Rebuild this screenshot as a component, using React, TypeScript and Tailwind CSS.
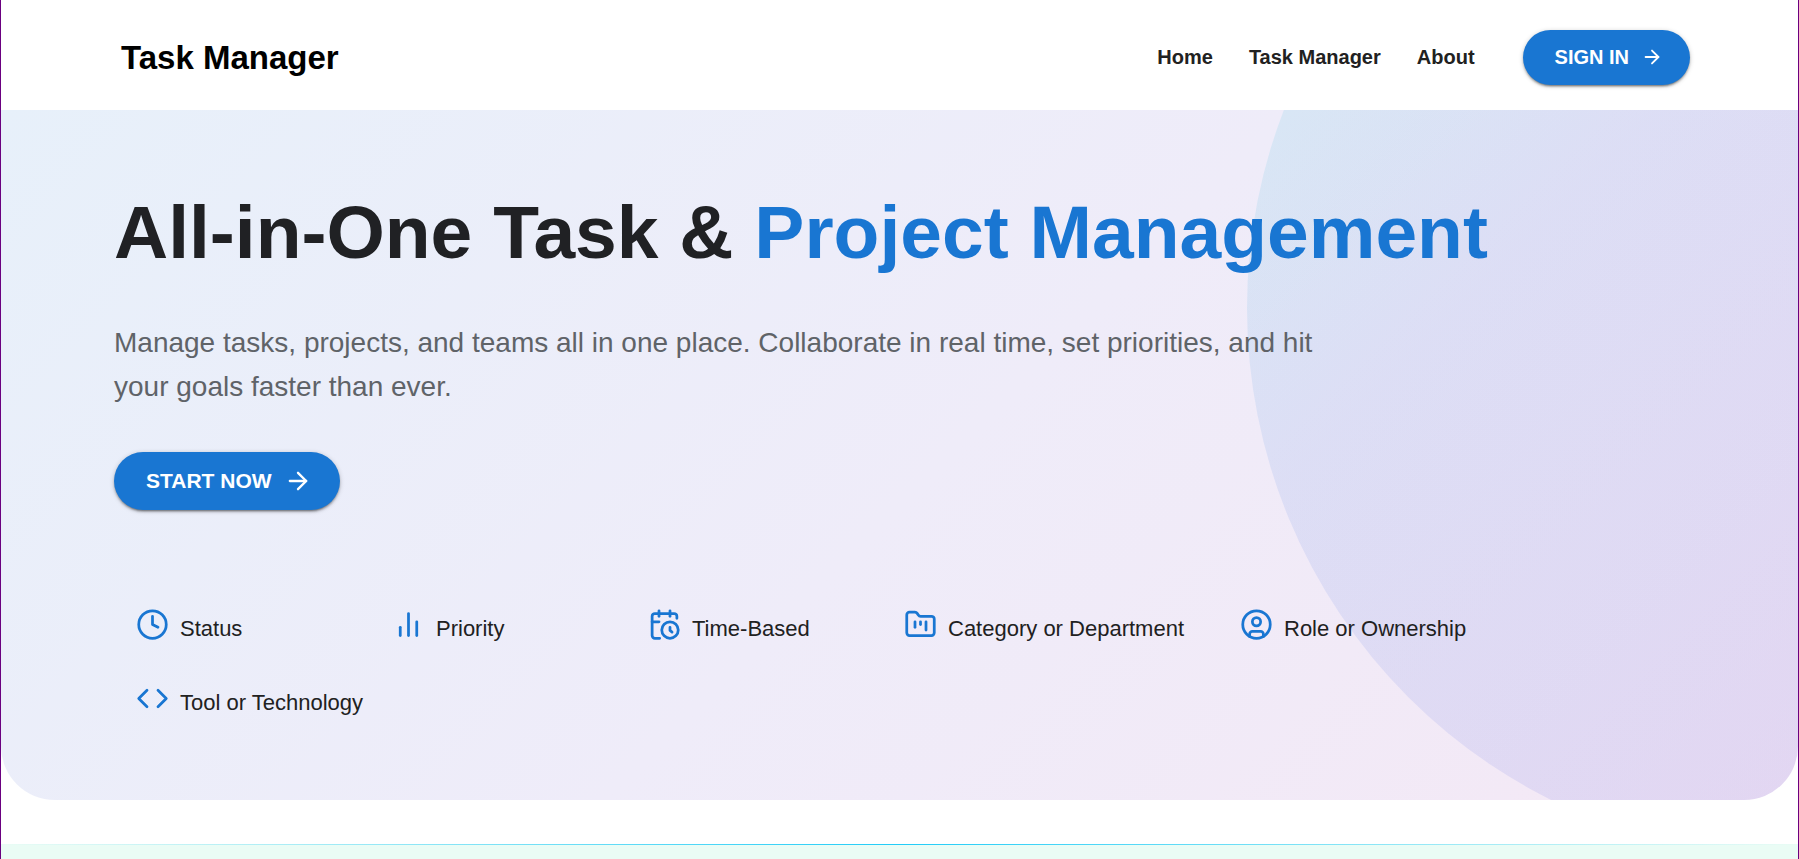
import type { ReactNode } from "react";
import { ArrowRight, Clock4, Code, FolderKanban } from "lucide-react";

const links = ["Home", "Task Manager", "About"];

function StrokeIcon({ children }: { children: ReactNode }) {
  return (
    <svg
      width="33"
      height="33"
      viewBox="0 0 24 24"
      fill="none"
      stroke="currentColor"
      strokeWidth="2"
      strokeLinecap="round"
      strokeLinejoin="round"
      aria-hidden="true"
    >
      {children}
    </svg>
  );
}

const features: { label: string; icon: ReactNode }[] = [
  { label: "Status", icon: <Clock4 size={33} aria-hidden="true" /> },
  {
    label: "Priority",
    icon: (
      <StrokeIcon>
        <path d="M18 20V10" />
        <path d="M12 20V4" />
        <path d="M6 20v-6" />
      </StrokeIcon>
    ),
  },
  {
    label: "Time-Based",
    icon: (
      <StrokeIcon>
        <path d="M21 7.5V6a2 2 0 0 0-2-2H5a2 2 0 0 0-2 2v14a2 2 0 0 0 2 2h3.5" />
        <path d="M16 2v4" />
        <path d="M8 2v4" />
        <path d="M3 10h5" />
        <path d="M17.5 17.5 16 16.3V14" />
        <circle cx="16" cy="16" r="6" />
      </StrokeIcon>
    ),
  },
  { label: "Category or Department", icon: <FolderKanban size={33} aria-hidden="true" /> },
  {
    label: "Role or Ownership",
    icon: (
      <StrokeIcon>
        <circle cx="12" cy="12" r="10" />
        <circle cx="12" cy="10" r="3" />
        <path d="M7 20.662V19a2 2 0 0 1 2-2h6a2 2 0 0 1 2 2v1.662" />
      </StrokeIcon>
    ),
  },
  { label: "Tool or Technology", icon: <Code size={33} aria-hidden="true" /> },
];

const raised =
  "shadow-[0_3px_1px_-2px_rgba(0,0,0,0.2),0_2px_2px_0_rgba(0,0,0,0.24),0_1px_5px_0_rgba(0,0,0,0.2)]";

function Header() {
  return (
    <header className="flex h-[110px] items-center justify-between bg-white pr-[108px] pl-[120px]">
      <a href="#home" className="pt-1.5 text-[33px] leading-10 font-bold text-black">
        Task Manager
      </a>
      <div className="flex items-center gap-12">
        <nav className="flex items-center gap-9 pt-1 text-[20px] leading-6 font-bold text-[#212121]">
          {links.map((link) => (
            <a key={link} href="#home">
              {link}
            </a>
          ))}
        </nav>
        <button
          type="button"
          className={`mt-1 flex h-[55px] items-center gap-3 rounded-full bg-[#1976d2] pr-[27px] pl-8 text-[20px] font-bold text-white ${raised}`}
        >
          SIGN IN
          <ArrowRight size={22} aria-hidden="true" />
        </button>
      </div>
    </header>
  );
}

function Hero() {
  return (
    <section className="relative overflow-hidden rounded-b-[54px] bg-[linear-gradient(135deg,#e7f0fa_0%,#efecf9_52%,#f4e8f5_100%)] pt-[76px] pb-[82px] pl-[113px]">
      <div
        aria-hidden="true"
        className="absolute -top-[352px] -right-[549px] size-[1100px] rounded-full bg-[linear-gradient(135deg,#32bad7_18%,#4b7ee1_35%,#5568e0_55%,#6450da_75%)] opacity-12"
      />
      <div className="relative">
        <h1 className="text-[75px] leading-[92px] font-bold text-[#202124]">
          All-in-One Task &amp; <span className="text-[#1976d2]">Project Management</span>
        </h1>
        <p className="mt-[43px] max-w-[1200px] text-[28px] leading-11 text-[#5f6368]">
          Manage tasks, projects, and teams all in one place. Collaborate in real time, set
          priorities, and hit your goals faster than ever.
        </p>
        <button
          type="button"
          className={`mt-[43px] flex h-[58px] items-center gap-3 rounded-full bg-[#1976d2] pr-7 pl-8 text-[21px] font-bold text-white ${raised}`}
        >
          START NOW
          <ArrowRight size={28} aria-hidden="true" />
        </button>
        <ul className="mt-[98px] flex max-w-[1430px] flex-wrap gap-x-14 gap-y-[38px] pl-[22px]">
          {features.map(({ label, icon }) => (
            <li key={label} className="flex min-w-50 items-start gap-[11px] text-[#1976d2]">
              {icon}
              <span className="pt-1.5 text-[22px] leading-[30px] text-[#212121]">{label}</span>
            </li>
          ))}
        </ul>
      </div>
    </section>
  );
}

export default function App() {
  return (
    <div className="h-screen overflow-hidden border-x border-[#6a0080] bg-white font-['Liberation_Sans',Arial,sans-serif]">
      <Header />
      <Hero />
      <section className="mt-11 h-40 bg-[#eafcf5]">
        <div className="h-px bg-linear-to-r from-transparent via-[#22ccf8] to-transparent" />
      </section>
    </div>
  );
}
